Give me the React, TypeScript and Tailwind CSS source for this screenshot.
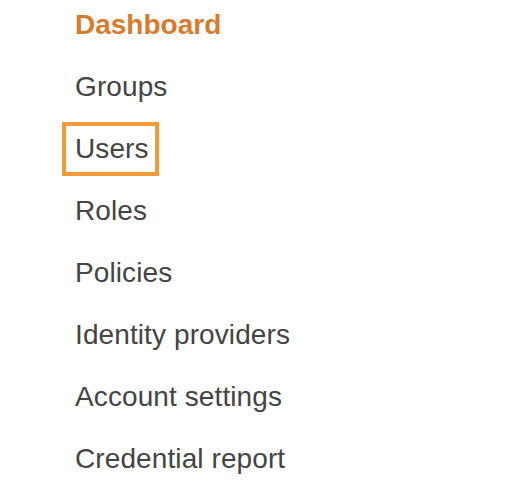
import React from "react";

const items = [
  "Groups",
  "Users",
  "Roles",
  "Policies",
  "Identity providers",
  "Account settings",
  "Credential report",
];

export default function App() {
  return (
    <div
      className="w-[528px] h-[500px] bg-white overflow-hidden"
      style={{ fontFamily: '"Liberation Sans", Arial, sans-serif' }}
    >
      <nav className="flex flex-col gap-[12px] pl-[75px] text-[28px] leading-[50px] text-[#444444] tracking-[0.1px]">
        <div className="font-bold text-[#d97b2c] tracking-normal">Dashboard</div>
        {items.map((it) =>
          it === "Users" ? (
            <div key={it}>
              <span className="inline-block leading-[32px] py-[7px] pl-[9px] pr-[6px] -my-[7px] -ml-[9px] outline-4 outline-solid outline-[#f19a37]">
                {it}
              </span>
            </div>
          ) : (
            <div key={it}>{it}</div>
          )
        )}
      </nav>
    </div>
  );
}
